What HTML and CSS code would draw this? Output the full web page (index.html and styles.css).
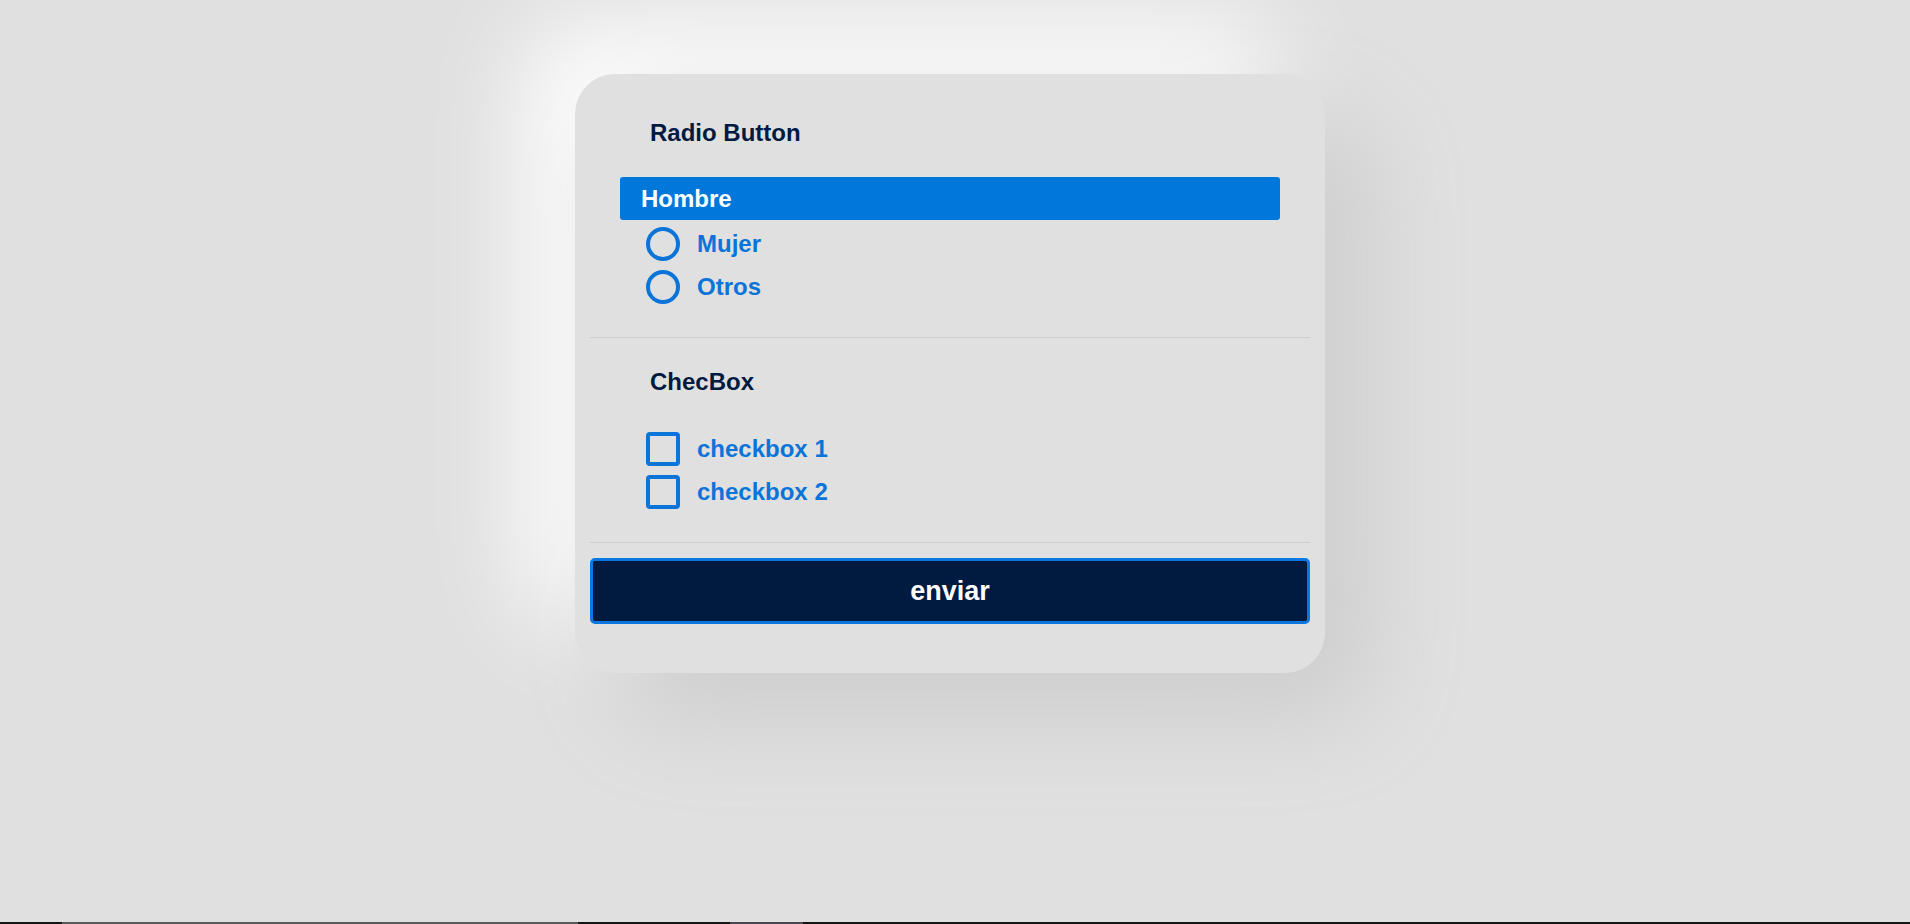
FILE: index.html
```html
<!DOCTYPE html>
<html lang="es">
<head>
<meta charset="utf-8">
<title>Formulario</title>
<link rel="stylesheet" href="styles.css">
</head>
<body>
<main class="page">
  <form class="card">
    <section class="group">
      <h2 class="group-title">Radio Button</h2>
      <div class="options">
        <label class="option option-selected"><span class="radio"></span><span class="option-text">Hombre</span></label>
        <label class="option"><span class="radio"></span><span class="option-text">Mujer</span></label>
        <label class="option"><span class="radio"></span><span class="option-text">Otros</span></label>
      </div>
    </section>
    <section class="group">
      <h2 class="group-title group-title-second">ChecBox</h2>
      <div class="options options-checks">
        <label class="option"><span class="check"></span><span class="option-text">checkbox 1</span></label>
        <label class="option"><span class="check"></span><span class="option-text">checkbox 2</span></label>
      </div>
    </section>
    <button type="button" class="submit">enviar</button>
  </form>
</main>
<div class="bottom-strip">
  <span class="seg seg-black1"></span>
  <span class="seg seg-grey"></span>
  <span class="seg seg-black2"></span>
  <span class="seg seg-purple"></span>
  <span class="seg seg-rest"></span>
</div>
</body>
</html>
```
FILE: styles.css
```css
html, body {
  margin: 0;
  padding: 0;
  height: 100%;
  overflow: hidden;
}

body {
  background: #e0e0e0;
  font-family: "Liberation Sans", Arial, sans-serif;
}

.page {
  display: flex;
  justify-content: center;
  align-items: flex-start;
  padding: 74px 10px 0 0;
}

.card {
  width: 750px;
  box-sizing: border-box;
  padding: 45px 15px 49px;
  border-radius: 40px;
  background: #e0e0e0;
  box-shadow: 45px 45px 100px #cdcdcd, -50px -50px 100px #ffffff;
  display: flex;
  flex-direction: column;
}

.group {
  border-bottom: 1px solid #cdcdcd;
  padding-bottom: 29px;
}

.group-title {
  margin: 0 0 0 60px;
  font-size: 24px;
  line-height: 27px;
  font-weight: bold;
  color: #001a40;
}

.group-title-second {
  margin-top: 30px;
}

.options {
  display: flex;
  flex-direction: column;
  margin-top: 31px;
}

.options-checks {
  margin-top: 32px;
}

.option {
  display: flex;
  align-items: center;
  gap: 17px;
  height: 43px;
  padding-left: 56px;
  color: #0a74d8;
  font-size: 24px;
  font-weight: bold;
}

.option-text {
  line-height: 27px;
}

.radio {
  width: 34px;
  height: 34px;
  box-sizing: border-box;
  border: 4px solid #0a74d8;
  border-radius: 50%;
}

.check {
  width: 34px;
  height: 34px;
  box-sizing: border-box;
  border: 4px solid #0a74d8;
  border-radius: 4px;
}

.option-selected {
  margin: 0 30px 2px;
  padding-left: 21px;
  background: #0077db;
  border-radius: 3px;
  color: #ffffff;
}

.option-selected .radio {
  display: none;
}

.submit {
  margin-top: 15px;
  height: 66px;
  border: 3px solid #0a78e0;
  border-radius: 5px;
  background: #001a40;
  color: #ffffff;
  font-family: "Liberation Sans", Arial, sans-serif;
  font-size: 27px;
  font-weight: bold;
  padding: 0;
}

.bottom-strip {
  position: fixed;
  left: 0;
  right: 0;
  bottom: 0;
  height: 2px;
  display: flex;
  background: #151515;
}

.seg {
  display: block;
  height: 100%;
}

.seg-black1 { width: 62px; background: #151515; }
.seg-grey { width: 516px; background: #5a5a5a; }
.seg-black2 { width: 152px; background: #151515; }
.seg-purple { width: 73px; background: #4b4652; }
.seg-rest { flex: 1; background: #151515; }
```
